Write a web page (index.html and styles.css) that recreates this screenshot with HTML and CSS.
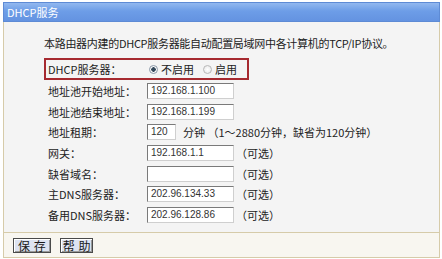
FILE: index.html
```html
<!DOCTYPE html>
<html>
<head>
<meta charset="utf-8">
<link rel="stylesheet" href="styles.css">
</head>
<body>
<div class="panel">
  <div class="head">DHCP服务</div>
  <div class="body">
    <p class="intro">本路由器内建的DHCP服务器能自动配置局域网中各计算机的TCP/IP协议。</p>
    <div class="form">
      <div class="row hl">
        <span class="lab">DHCP服务器：</span>
        <span class="radios">
          <span class="radio on"></span><span class="rt">不启用</span>
          <span class="radio"></span><span class="rt">启用</span>
        </span>
      </div>
      <div class="row"><span class="lab">地址池开始地址：</span><span class="inp">192.168.1.100</span></div>
      <div class="row"><span class="lab">地址池结束地址：</span><span class="inp">192.168.1.199</span></div>
      <div class="row"><span class="lab">地址租期：</span><span class="inp short">120</span><span class="note">分钟 （1～2880分钟，缺省为120分钟）</span></div>
      <div class="row"><span class="lab">网关：</span><span class="inp">192.168.1.1</span><span class="note opt">（可选）</span></div>
      <div class="row"><span class="lab">缺省域名：</span><span class="inp"></span><span class="note opt">（可选）</span></div>
      <div class="row"><span class="lab">主DNS服务器：</span><span class="inp">202.96.134.33</span><span class="note opt">（可选）</span></div>
      <div class="row"><span class="lab">备用DNS服务器：</span><span class="inp">202.96.128.86</span><span class="note opt">（可选）</span></div>
    </div>
  </div>
  <div class="foot">
    <span class="btn save">保 存</span>
    <span class="btn">帮 助</span>
  </div>
</div>
</body>
</html>
```
FILE: styles.css
```css
html, body { margin: 0; padding: 0; background: #ffffff; }
body {
  font-family: "SimSun", "Noto Sans CJK SC", sans-serif;
  font-size: 11px;
  color: #222;
}
.panel {
  margin: 2px 0 0 3px;
  width: 437px;
  height: 256px;
  display: flex;
  flex-direction: column;
  border: 1px solid #d6cba9;
  border-top: none;
  box-sizing: border-box;
  background: #f4f4f4;
}
.head {
  flex: none;
  height: 20px;
  line-height: 19px;
  padding-left: 3px;
  color: #fff;
  font-size: 11px;
  background: linear-gradient(#92b8ef, #6d9de7 45%, #6493e1);
  border: 1px solid #5e8bd5;
  margin: 0 -1px;
  box-sizing: border-box;
}
.body {
  background: #f4f4f4;
  height: 211px;
  flex: none;
  padding: 0 0 0 40px;
  border-bottom: 1px solid #d6cba9;
  box-sizing: border-box;
}
.intro {
  margin: 13px 0 7px 0;
  line-height: 16px;
  white-space: nowrap;
  letter-spacing: -0.3px;
}
.form { display: flex; flex-direction: column; }
.row {
  display: flex;
  align-items: center;
  height: 20.6px;
  padding-left: 4px;
}
.row.hl {
  width: 199px;
  height: 18px;
  border: 2px solid #a62a30;
  padding-left: 2px;
  margin-bottom: 1px;
}
.lab { width: 99px; flex: none; }
.hl .lab { width: 101px; }
.radios { display: flex; align-items: center; }
.radio {
  width: 9px; height: 9px;
  border-radius: 50%;
  border: 1px solid #b8b8b8;
  background: radial-gradient(#fff, #e4e4e4);
  margin-right: 3px;
  box-sizing: border-box;
}
.radio.on {
  background: radial-gradient(circle, #34495c 0 2px, #fff 2.5px, #e0e0e0);
  border-color: #8a98a8;
}
.rt { margin-right: 9px; }
.inp {
  width: 87px;
  height: 16px;
  flex: none;
  box-sizing: border-box;
  border: 1px solid #7a7a7a;
  border-right-color: #cfcfcf;
  border-bottom-color: #cfcfcf;
  background: #fff;
  line-height: 14px;
  padding-left: 3px;
  font-size: 10px;
  font-family: "Liberation Sans", sans-serif;
  color: #333;
}
.inp.short { width: 29px; }
.note { margin-left: 7px; }
.opt { margin-left: 2px; }
.foot {
  flex: 1;
  background: #f8f6f0;
  display: flex;
  align-items: center;
  gap: 9px;
  padding-left: 9px;
}
.btn {
  background: #dde3f1;
  border: 1px solid #4a4a4a;
  box-shadow: inset 1px 1px 0 #ffffff, inset -1px -1px 0 #9a9a9a;
  height: 13px;
  line-height: 13px;
  padding: 0 2px;
  font-size: 12px;
  color: #1a1a1a;
  word-spacing: 1px;
}
.btn.save { padding: 0 4px; }
```
